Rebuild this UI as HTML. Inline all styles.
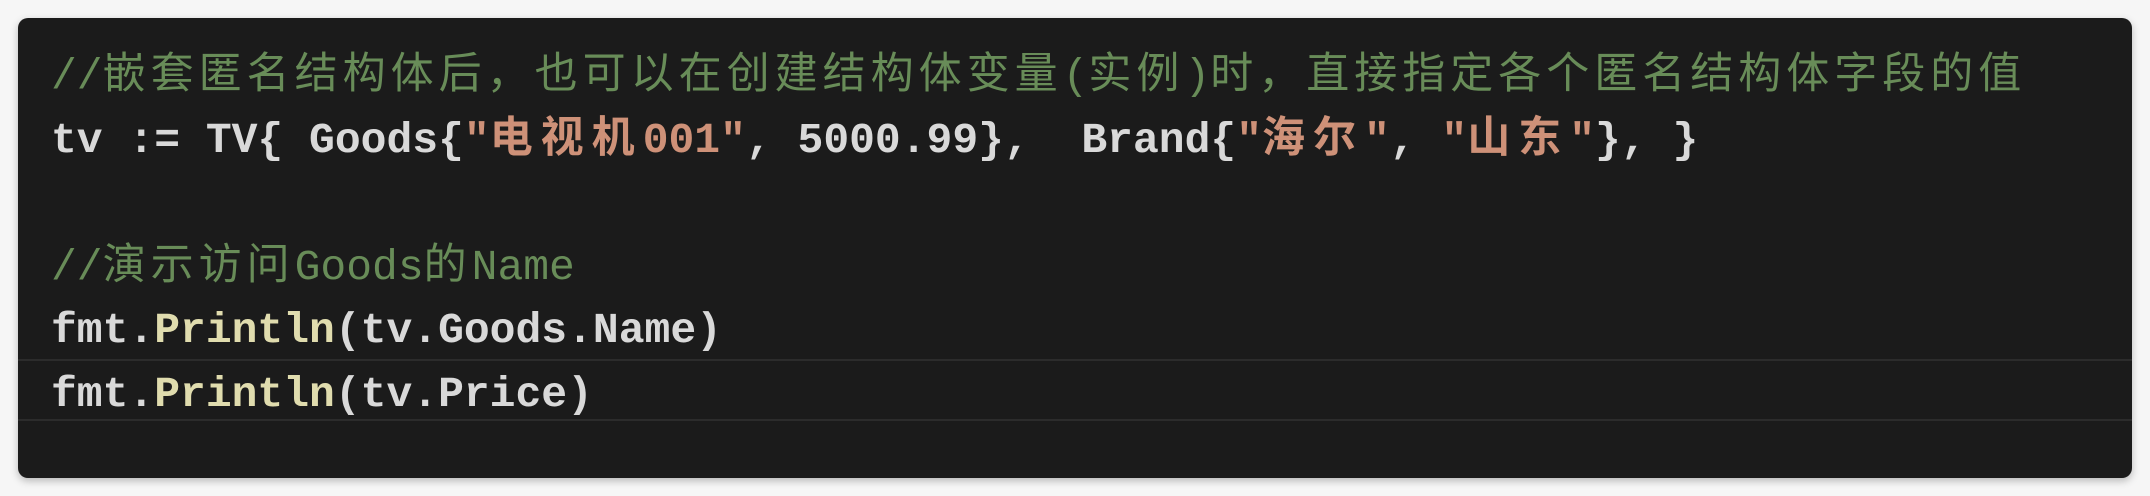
<!DOCTYPE html>
<html><head><meta charset="utf-8"><style>
html,body{margin:0;padding:0;background:#f6f6f6;width:2150px;height:496px;overflow:hidden}
.panel{position:absolute;left:18px;top:18px;width:2114px;height:460px;background:#1b1b1b;border-radius:10px;box-shadow:0 3px 8px rgba(0,0,0,.25)}
.code{position:absolute;left:33px;top:27px;font-family:"Liberation Mono","Noto Sans CJK SC",monospace;font-size:43px;line-height:63.5px;color:#d9d9d9;font-weight:bold;white-space:pre}
.c{color:#688c58;font-weight:normal}
.c .z{letter-spacing:5px}
.s{color:#ce9178}
.s .z{letter-spacing:8px}
.f{color:#e0dcae}
.hl{position:absolute;left:0;right:0;top:341px;height:58px;border-top:2px solid #2c2c2c;border-bottom:2px solid #2c2c2c}
</style></head><body>
<div class="panel">
<div class="hl"></div>
<div class="code"><span class="c">//<span class="z">嵌套匿名结构体后，也可以在创建结构体变量</span>(<span class="z">实例</span>)<span class="z">时，直接指定各个匿名结构体字段的值</span></span>
tv := TV{ Goods{<span class="s">"<span class="z">电视机</span>001"</span>, 5000.99},  Brand{<span class="s">"<span class="z">海尔</span>"</span>, <span class="s">"<span class="z">山东</span>"</span>}, }

<span class="c">//<span class="z">演示访问</span>Goods<span class="z">的</span>Name</span>
fmt.<span class="f">Println</span>(tv.Goods.Name)
fmt.<span class="f">Println</span>(tv.Price)</div>
</div>
</body></html>
